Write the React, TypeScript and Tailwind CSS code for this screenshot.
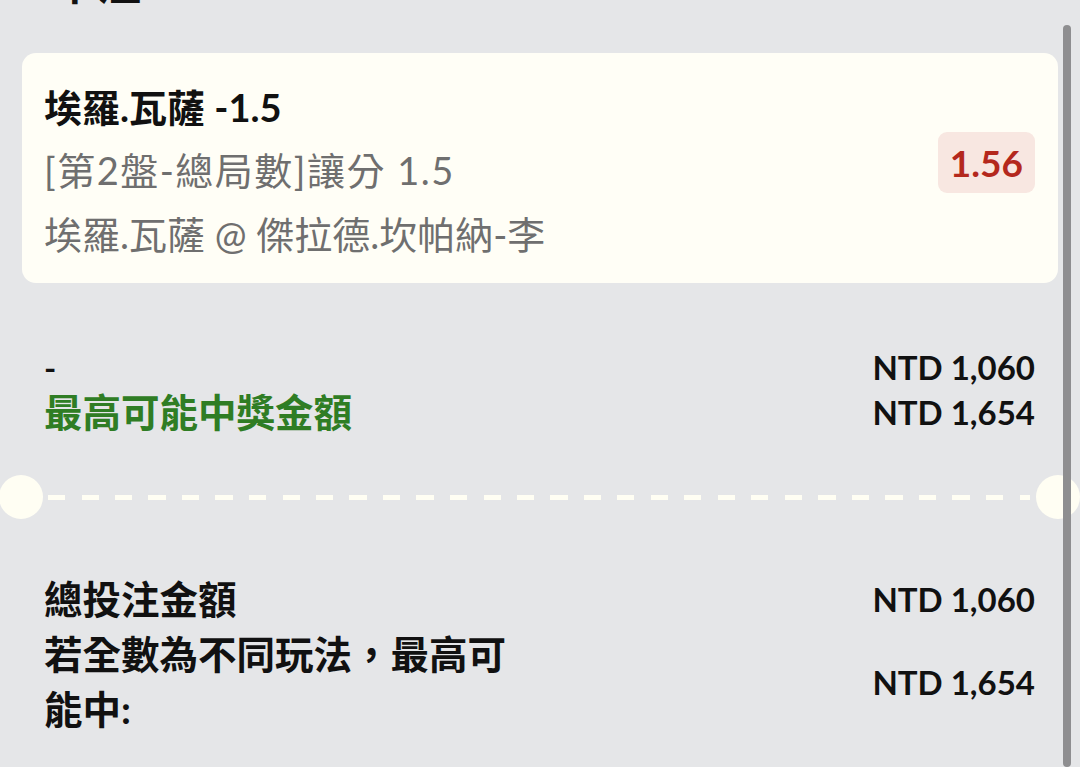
import React from 'react';

const font = { fontFamily: "Lato, 'Noto Sans CJK TC', sans-serif" };

function AmountRow({ label, amount, labelClass }: { label: string; amount: string; labelClass: string }) {
  return (
    <div className="flex items-center justify-between">
      <div className={labelClass}>{label}</div>
      <div className="text-[33px] font-bold leading-[45px] text-[#111111]">{amount}</div>
    </div>
  );
}

export default function App() {
  return (
    <div className="relative h-[767px] w-[1080px] overflow-hidden bg-[#e5e6e8]" style={font}>
      {/* scrolled-off heading */}
      <div className="-mt-[37px] h-[40px] pl-[53px] text-[44px] font-bold leading-[40px] text-[#111111]">單注</div>

      {/* selection card */}
      <div className="mx-[22px] mt-[50px] flex items-start justify-between rounded-[14px] bg-[#fffef6] pb-[17px] pl-[22px] pr-[23px] pt-[23px]">
        <div>
          <div className="text-[38px] font-bold leading-[62px] text-[#111111]">埃羅.瓦薩 -1.5</div>
          <div className="text-[38px] leading-[64px] tracking-[1.5px] text-[#6f6f6f]">[第2盤-總局數]讓分 1.5</div>
          <div className="text-[38px] leading-[64px] text-[#6f6f6f]">埃羅.瓦薩 @ 傑拉德.坎帕納-李</div>
        </div>
        <div className="mt-[56px] flex h-[61px] items-center rounded-[9px] bg-[#f8e7e1] px-[12px] text-[37px] font-bold text-[#b4281d]">
          1.56
        </div>
      </div>

      {/* stake / return */}
      <div className="mt-[62px] pl-[44px] pr-[45px]">
        <AmountRow label="-" amount="NTD 1,060" labelClass="text-[33px] font-bold leading-[45px] text-[#111111]" />
        <AmountRow
          label="最高可能中獎金額"
          amount="NTD 1,654"
          labelClass="text-[38.5px] font-bold leading-[45px] text-[#2f7d24]"
        />
      </div>

      {/* ticket divider */}
      <div className="mt-[40px] flex h-[44px] items-center">
        <div className="-ml-[1px] h-[44px] w-[44px] shrink-0 rounded-full bg-[#fffef3]" />
        <div className="ml-[5px] mr-[6px] h-[5px] flex-1 bg-[repeating-linear-gradient(to_right,#fffef3_0,#fffef3_17px,transparent_17px,transparent_33.5px)]" />
        <div className="h-[44px] w-[44px] shrink-0 rounded-full bg-[#fffef3]" />
      </div>

      {/* totals */}
      <div className="mt-[53px] pl-[44px] pr-[45px]">
        <div className="flex items-center justify-between">
          <div className="text-[38.5px] font-bold leading-[55px] text-[#111111]">總投注金額</div>
          <div className="text-[33px] font-bold leading-[55px] text-[#111111]">NTD 1,060</div>
        </div>
        <div className="flex items-center justify-between">
          <div className="max-w-[480px] text-[38.5px] font-bold leading-[55px] text-[#111111]">
            若全數為不同玩法，最高可能中:
          </div>
          <div className="text-[33px] font-bold leading-[55px] text-[#111111]">NTD 1,654</div>
        </div>
      </div>

      {/* scrollbar */}
      <div className="absolute bottom-0 right-[9px] top-[25px] w-[8px] rounded-full bg-[#8e8e90]" />
    </div>
  );
}
